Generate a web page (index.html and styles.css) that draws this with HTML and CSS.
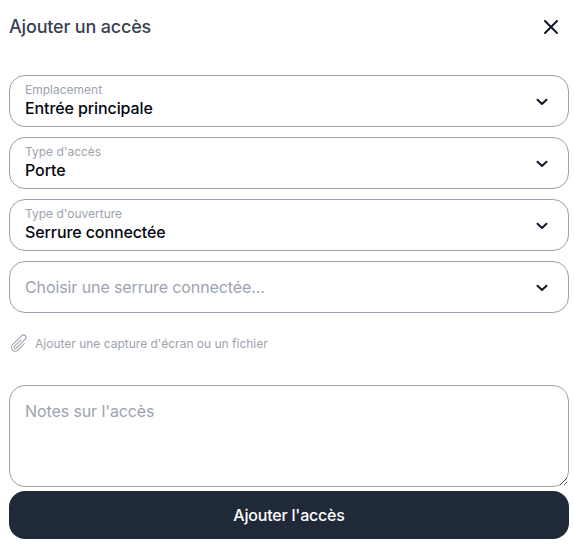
FILE: index.html
```html
<!DOCTYPE html>
<html lang="fr">
<head>
<meta charset="utf-8">
<title>Ajouter un accès</title>
<link rel="stylesheet" href="styles.css">
</head>
<body>
<main class="dialog">
  <header class="head">
    <h1 class="title">Ajouter un accès</h1>
    <button class="close" type="button" aria-label="Fermer">
      <svg width="24" height="24" viewBox="0 0 24 24" fill="none" stroke="#111827" stroke-width="2" stroke-linecap="round"><path d="M6 6l12 12M18 6L6 18"/></svg>
    </button>
  </header>
  <div class="fields">
    <div class="field">
      <div class="value-wrap"><span class="label">Emplacement</span><span class="value">Entrée principale</span></div>
      <svg class="chev" width="16" height="16" viewBox="0 0 16 16" fill="none" stroke="#111827" stroke-width="2" stroke-linecap="round" stroke-linejoin="round"><path d="M3.5 6.75l4.5 4.25 4.5-4.25"/></svg>
    </div>
    <div class="field">
      <div class="value-wrap"><span class="label">Type d'accès</span><span class="value">Porte</span></div>
      <svg class="chev" width="16" height="16" viewBox="0 0 16 16" fill="none" stroke="#111827" stroke-width="2" stroke-linecap="round" stroke-linejoin="round"><path d="M3.5 6.75l4.5 4.25 4.5-4.25"/></svg>
    </div>
    <div class="field">
      <div class="value-wrap"><span class="label">Type d'ouverture</span><span class="value">Serrure connectée</span></div>
      <svg class="chev" width="16" height="16" viewBox="0 0 16 16" fill="none" stroke="#111827" stroke-width="2" stroke-linecap="round" stroke-linejoin="round"><path d="M3.5 6.75l4.5 4.25 4.5-4.25"/></svg>
    </div>
    <div class="field">
      <div class="value-wrap"><span class="placeholder">Choisir une serrure connectée...</span></div>
      <svg class="chev" width="16" height="16" viewBox="0 0 16 16" fill="none" stroke="#111827" stroke-width="2" stroke-linecap="round" stroke-linejoin="round"><path d="M3.5 6.75l4.5 4.25 4.5-4.25"/></svg>
    </div>
  </div>
  <div class="attach">
    <svg width="20" height="20" viewBox="0 0 24 24" fill="none" stroke="#9ca3af" stroke-width="1.25" stroke-linecap="round" stroke-linejoin="round"><path d="M18.375 12.739l-7.693 7.693a4.5 4.5 0 01-6.364-6.364l10.94-10.94A3 3 0 1119.5 7.372L8.552 18.32m.009-.01l-.01.01m5.699-9.941l-7.81 7.81a1.5 1.5 0 002.112 2.13"/></svg>
    <span>Ajouter une capture d'écran ou un fichier</span>
  </div>
  <textarea class="notes" placeholder="Notes sur l'accès"></textarea>
  <button class="submit" type="button">Ajouter l'accès</button>
</main>
</body>
</html>
```
FILE: styles.css
```css
* { box-sizing: border-box; }
html, body { margin: 0; background: #fff; }
body { font-family: Inter, "Liberation Sans", sans-serif; }
.dialog { width: 574px; padding: 0 5px 0 9px; }
.head { height: 54px; display: flex; align-items: center; justify-content: space-between; }
.title { margin: 0; font-size: 18px; line-height: 28px; font-weight: 500; letter-spacing: -0.18px; color: #374151; }
.close { width: 24px; height: 24px; padding: 0; margin-right: 6px; border: 0; background: none; display: flex; }
.fields { margin-top: 21px; display: flex; flex-direction: column; gap: 10px; }
.field { height: 52px; border: 1px solid #9ca3af; border-radius: 16px; padding: 0 18px 0 15px; display: flex; align-items: center; justify-content: space-between; }
.value-wrap { display: flex; flex-direction: column; }
.label { font-size: 12px; line-height: 14px; color: #9ca3af; }
.value { font-size: 16px; line-height: 22px; font-weight: 500; letter-spacing: -0.1px; color: #030712; }
.placeholder { font-size: 16px; line-height: 24px; letter-spacing: -0.1px; color: #9ca3af; }
.attach { height: 20px; margin-top: 20px; display: flex; align-items: center; gap: 6px; font-size: 12px; color: #9ca3af; }
.notes { display: block; width: 560px; height: 102px; margin-top: 32px; padding: 13px 15px; border: 1px solid #9ca3af; border-radius: 16px; font-family: inherit; font-size: 16px; line-height: 24px; letter-spacing: -0.1px; outline: none; color: #111827; }
.notes::placeholder { color: #9ca3af; opacity: 1; }
.submit { display: block; width: 560px; height: 48px; margin-top: 4px; border: 0; border-radius: 16px; background: #1f2937; color: #fff; font-family: inherit; font-size: 16px; font-weight: 500; letter-spacing: -0.2px; }
```
